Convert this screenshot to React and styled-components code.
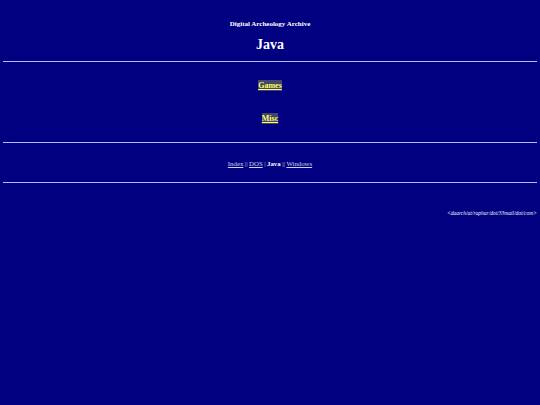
import { createGlobalStyle, styled } from "styled-components";

const Global = createGlobalStyle`
    html, body {
        margin : 0;
        padding : 0;
        background-color : #000080;
        min-height : 100%;
    }
    body {
        font-family : "Liberation Serif", "Times New Roman", serif;
        color : #ffffff;
    }
`

const Page = styled.div`
    padding : 0 3px;
    min-height : 405px;
    box-sizing : border-box;
`

const Header = styled.header`
    display : flex;
    flex-direction : column;
    align-items : center;
    padding-top : 19px;
`

const SiteName = styled.div`
    font-size : 7px;
    font-weight : bold;
    line-height : 10px;
`

const Title = styled.h1`
    margin : 8px 0 0;
    font-size : 14px;
    line-height : 16px;
`

const Rule = styled.hr`
    margin : ${({ $top }) => $top}px 0 0;
    border : none;
    height : 1px;
    background-color : #b8b8ff;
`

const Sections = styled.div`
    display : flex;
    flex-direction : column;
    align-items : center;
    row-gap : 22px;
    padding-top : 18px;
`

const SectionLink = styled.a`
    font-size : 8px;
    font-weight : bold;
    line-height : 11px;
    color : #ffff66;
    background-color : #45456a;
    text-decoration : underline;
`

const Nav = styled.nav`
    display : flex;
    justify-content : center;
    align-items : baseline;
    column-gap : 1.5px;
    margin-top : 16px;
    font-size : 6.8px;
    line-height : 9px;
    color : #d0d0ff;
`

const NavLink = styled.a`
    color : #d0d0f0;
    text-decoration : underline;
`

const Current = styled.span`
    color : #ffffff;
    font-weight : bold;
`

const Footer = styled.address`
    margin-top : 26px;
    text-align : right;
    font-size : 5.5px;
    font-style : italic;
    line-height : 8px;
    color : #f0f0ff;
`

const sections = ["Games", "Misc"]

function App() {
    return (
        <Page>
            <Global />
            <Header>
                <SiteName>Digital Archeology Archive</SiteName>
                <Title>Java</Title>
            </Header>
            <Rule $top={8} />
            <Sections>
                {sections.map((name) => (
                    <SectionLink key={name} href="#">{name}</SectionLink>
                ))}
            </Sections>
            <Rule $top={18} />
            <Nav>
                <NavLink href="#">Index</NavLink> || <NavLink href="#">DOS</NavLink> | <Current>Java</Current> || <NavLink href="#">Windows</NavLink>
            </Nav>
            <Rule $top={14} />
            <Footer>&lt;daarch/at/raphar/dot/33mail/dot/com&gt;</Footer>
        </Page>
    )
}

export default App;
